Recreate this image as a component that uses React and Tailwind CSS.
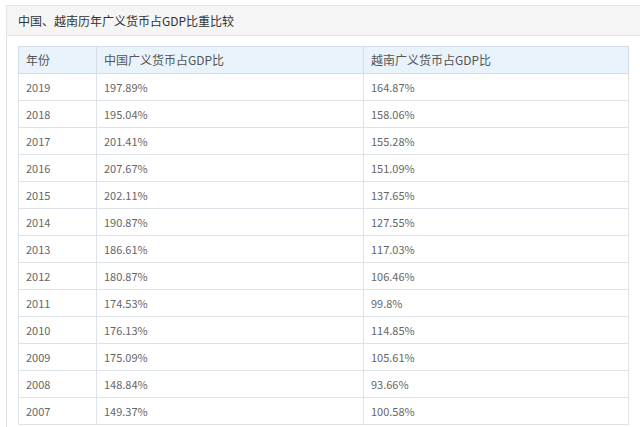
const rows = [
  ['2019', '197.89%', '164.87%'],
  ['2018', '195.04%', '158.06%'],
  ['2017', '201.41%', '155.28%'],
  ['2016', '207.67%', '151.09%'],
  ['2015', '202.11%', '137.65%'],
  ['2014', '190.87%', '127.55%'],
  ['2013', '186.61%', '117.03%'],
  ['2012', '180.87%', '106.46%'],
  ['2011', '174.53%', '99.8%'],
  ['2010', '176.13%', '114.85%'],
  ['2009', '175.09%', '105.61%'],
  ['2008', '148.84%', '93.66%'],
  ['2007', '149.37%', '100.58%'],
];

export default function App() {
  return (
    <div className="w-[640px] h-[427px] overflow-hidden bg-white pt-[5px] pl-[6px]" style={{ fontFamily: '"Noto Sans CJK SC", "Liberation Sans", sans-serif' }}>
      <div className="border-l border-t border-[#e4e4e4] h-full">
        <div className="h-[30px] bg-[#f5f5f5] border-b border-[#e8e8e8] flex items-center pl-[11px] text-[12px] text-[#333]">
          中国、越南历年广义货币占GDP比重比较
        </div>
        <div className="pt-[10px] pl-[11px]">
          <table className="w-[611px] border-collapse text-[11px] text-[#666]">
            <thead>
              <tr className="bg-[#e9f3fb] h-[27px] text-[12px] text-[#555]">
                <th className="w-[78px] border border-[#d4dde5] text-left font-normal pl-[7px]">年份</th>
                <th className="w-[267px] border border-[#d4dde5] text-left font-normal pl-[7px]">中国广义货币占GDP比</th>
                <th className="border border-[#d4dde5] text-left font-normal pl-[7px]">越南广义货币占GDP比</th>
              </tr>
            </thead>
            <tbody>
              {rows.map((r) => (
                <tr key={r[0]} className="h-[27px]">
                  {r.map((c, i) => (
                    <td key={i} className="border border-[#dde3e8] pl-[7px]">{c}</td>
                  ))}
                </tr>
              ))}
            </tbody>
          </table>
        </div>
      </div>
    </div>
  );
}
